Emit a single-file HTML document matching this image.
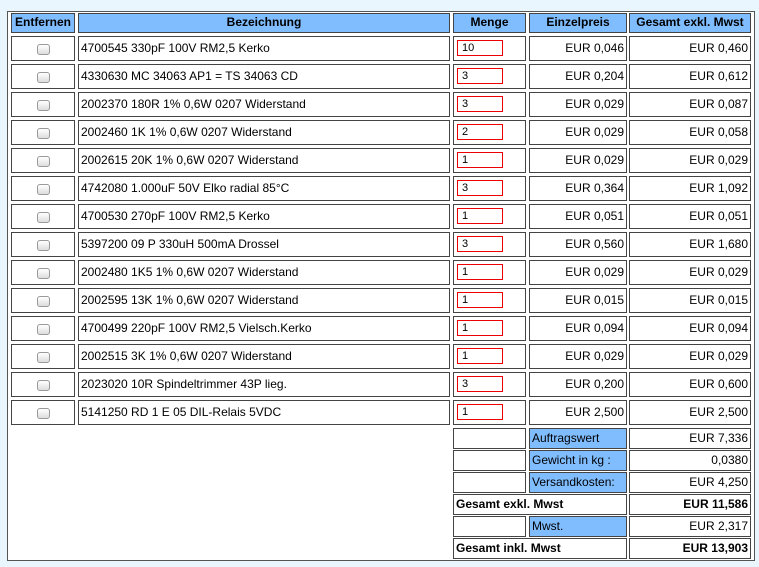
<!DOCTYPE html>
<html><head><meta charset="utf-8"><style>
body{margin:0;width:759px;height:567px;background:#e9f6fd;font-family:"Liberation Sans",sans-serif;font-size:12px;color:#000;position:relative;overflow:hidden}
.o{position:absolute;left:7px;top:11px;width:746px;height:548px;border:1px solid #555;background:#fff}
.c{position:absolute;box-sizing:border-box;border:1px solid #444;background:#fff;white-space:nowrap;line-height:22px;overflow:hidden}
.h{background:#80bdff;font-weight:bold;text-align:center;line-height:17px;height:20px;top:13px}
.r{height:25px}
.s{height:21px;line-height:19px}
.a{left:11px;width:64px}
.b{left:78px;width:372px;padding-left:2px}
.m{left:453px;width:73px}
.e{left:529px;width:98px;text-align:right;padding-right:2px}
.g{left:629px;width:122px;text-align:right;padding-right:2px}
.lb{background:#80bdff;text-align:left;padding-left:2px}
.bd{font-weight:bold}
.cb{position:absolute;left:25px;top:7px;width:11px;height:9px;border:1px solid #999;border-radius:3px;background:linear-gradient(#fff,#ddd)}
.in{position:absolute;left:3px;top:3px;width:46px;height:16px;box-sizing:border-box;border:1px solid #e00;line-height:14px;padding-left:4px;font-size:11px}
</style></head><body>
<div class="o"></div>
<div class="c h a">Entfernen</div>
<div class="c h b" style="padding:0">Bezeichnung</div>
<div class="c h m">Menge</div>
<div class="c h e" style="text-align:center;padding:0">Einzelpreis</div>
<div class="c h g" style="text-align:center;padding:0">Gesamt exkl. Mwst</div>

<div class="c r a" style="top:36px"><span class="cb"></span></div><div class="c r b" style="top:36px">4700545 330pF 100V RM2,5 Kerko</div><div class="c r m" style="top:36px"><span class="in">10</span></div><div class="c r e" style="top:36px">EUR 0,046</div><div class="c r g" style="top:36px">EUR 0,460</div>
<div class="c r a" style="top:64px"><span class="cb"></span></div><div class="c r b" style="top:64px">4330630 MC 34063 AP1 = TS 34063 CD</div><div class="c r m" style="top:64px"><span class="in">3</span></div><div class="c r e" style="top:64px">EUR 0,204</div><div class="c r g" style="top:64px">EUR 0,612</div>
<div class="c r a" style="top:92px"><span class="cb"></span></div><div class="c r b" style="top:92px">2002370 180R 1% 0,6W 0207 Widerstand</div><div class="c r m" style="top:92px"><span class="in">3</span></div><div class="c r e" style="top:92px">EUR 0,029</div><div class="c r g" style="top:92px">EUR 0,087</div>
<div class="c r a" style="top:120px"><span class="cb"></span></div><div class="c r b" style="top:120px">2002460 1K 1% 0,6W 0207 Widerstand</div><div class="c r m" style="top:120px"><span class="in">2</span></div><div class="c r e" style="top:120px">EUR 0,029</div><div class="c r g" style="top:120px">EUR 0,058</div>
<div class="c r a" style="top:148px"><span class="cb"></span></div><div class="c r b" style="top:148px">2002615 20K 1% 0,6W 0207 Widerstand</div><div class="c r m" style="top:148px"><span class="in">1</span></div><div class="c r e" style="top:148px">EUR 0,029</div><div class="c r g" style="top:148px">EUR 0,029</div>
<div class="c r a" style="top:176px"><span class="cb"></span></div><div class="c r b" style="top:176px">4742080 1.000uF 50V Elko radial 85°C</div><div class="c r m" style="top:176px"><span class="in">3</span></div><div class="c r e" style="top:176px">EUR 0,364</div><div class="c r g" style="top:176px">EUR 1,092</div>
<div class="c r a" style="top:204px"><span class="cb"></span></div><div class="c r b" style="top:204px">4700530 270pF 100V RM2,5 Kerko</div><div class="c r m" style="top:204px"><span class="in">1</span></div><div class="c r e" style="top:204px">EUR 0,051</div><div class="c r g" style="top:204px">EUR 0,051</div>
<div class="c r a" style="top:232px"><span class="cb"></span></div><div class="c r b" style="top:232px">5397200 09 P 330uH 500mA Drossel</div><div class="c r m" style="top:232px"><span class="in">3</span></div><div class="c r e" style="top:232px">EUR 0,560</div><div class="c r g" style="top:232px">EUR 1,680</div>
<div class="c r a" style="top:260px"><span class="cb"></span></div><div class="c r b" style="top:260px">2002480 1K5 1% 0,6W 0207 Widerstand</div><div class="c r m" style="top:260px"><span class="in">1</span></div><div class="c r e" style="top:260px">EUR 0,029</div><div class="c r g" style="top:260px">EUR 0,029</div>
<div class="c r a" style="top:288px"><span class="cb"></span></div><div class="c r b" style="top:288px">2002595 13K 1% 0,6W 0207 Widerstand</div><div class="c r m" style="top:288px"><span class="in">1</span></div><div class="c r e" style="top:288px">EUR 0,015</div><div class="c r g" style="top:288px">EUR 0,015</div>
<div class="c r a" style="top:316px"><span class="cb"></span></div><div class="c r b" style="top:316px">4700499 220pF 100V RM2,5 Vielsch.Kerko</div><div class="c r m" style="top:316px"><span class="in">1</span></div><div class="c r e" style="top:316px">EUR 0,094</div><div class="c r g" style="top:316px">EUR 0,094</div>
<div class="c r a" style="top:344px"><span class="cb"></span></div><div class="c r b" style="top:344px">2002515 3K 1% 0,6W 0207 Widerstand</div><div class="c r m" style="top:344px"><span class="in">1</span></div><div class="c r e" style="top:344px">EUR 0,029</div><div class="c r g" style="top:344px">EUR 0,029</div>
<div class="c r a" style="top:372px"><span class="cb"></span></div><div class="c r b" style="top:372px">2023020 10R Spindeltrimmer 43P lieg.</div><div class="c r m" style="top:372px"><span class="in">3</span></div><div class="c r e" style="top:372px">EUR 0,200</div><div class="c r g" style="top:372px">EUR 0,600</div>
<div class="c r a" style="top:400px"><span class="cb"></span></div><div class="c r b" style="top:400px">5141250 RD 1 E 05 DIL-Relais 5VDC</div><div class="c r m" style="top:400px"><span class="in">1</span></div><div class="c r e" style="top:400px">EUR 2,500</div><div class="c r g" style="top:400px">EUR 2,500</div>

<div class="c s m" style="top:428px"></div><div class="c s e lb" style="top:428px">Auftragswert</div><div class="c s g" style="top:428px">EUR 7,336</div>
<div class="c s m" style="top:450px"></div><div class="c s e lb" style="top:450px">Gewicht in kg :</div><div class="c s g" style="top:450px">0,0380</div>
<div class="c s m" style="top:472px"></div><div class="c s e lb" style="top:472px">Versandkosten:</div><div class="c s g" style="top:472px">EUR 4,250</div>
<div class="c s bd" style="top:494px;left:453px;width:174px;padding-left:2px">Gesamt exkl. Mwst</div><div class="c s g bd" style="top:494px">EUR 11,586</div>
<div class="c s m" style="top:516px"></div><div class="c s e lb" style="top:516px">Mwst.</div><div class="c s g" style="top:516px">EUR 2,317</div>
<div class="c s bd" style="top:538px;left:453px;width:174px;padding-left:2px">Gesamt inkl. Mwst</div><div class="c s g bd" style="top:538px">EUR 13,903</div>
</body></html>
